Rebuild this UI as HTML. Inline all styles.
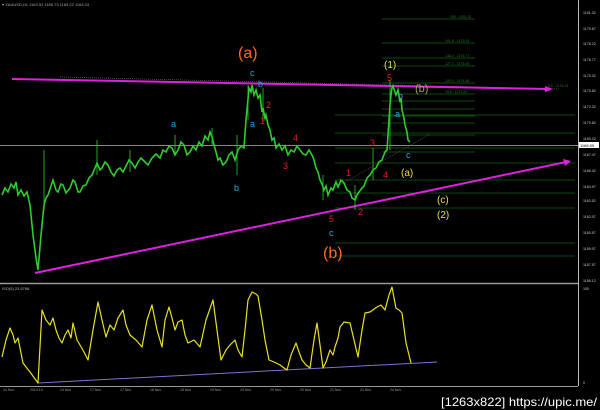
<!DOCTYPE html>
<html><head><meta charset="utf-8"><style>
html,body{margin:0;padding:0;background:#000;width:600px;height:410px;overflow:hidden}
svg{display:block}
text{font-family:"Liberation Sans",sans-serif}
</style></head><body>
<svg width="600" height="410" viewBox="0 0 600 410" xmlns="http://www.w3.org/2000/svg">
<rect width="600" height="410" fill="#000"/>
<text x="2" y="6" font-size="4" fill="#aaa">▾ XAUUSD,H1  1163.52  1165.73  1163.22  1164.03</text>
<line x1="578.5" y1="0" x2="578.5" y2="386" stroke="#bbb" stroke-width="1"/>
<line x1="0" y1="283.5" x2="578" y2="283.5" stroke="#999" stroke-width="1.5"/>
<line x1="0" y1="386.5" x2="578" y2="386.5" stroke="#999" stroke-width="1"/>
<g font-size="3.6" fill="#ccc">
<text x="583" y="14">1181.32</text><text x="583" y="30">1179.67</text><text x="583" y="45">1178.22</text><text x="583" y="61">1176.77</text><text x="583" y="77">1175.32</text><text x="583" y="92">1173.82</text><text x="583" y="108">1172.32</text><text x="583" y="124">1170.82</text><text x="583" y="140">1169.32</text><text x="583" y="156">1167.47</text><text x="583" y="172">1166.42</text><text x="583" y="188">1164.97</text><text x="583" y="202">1163.52</text><text x="583" y="218">1162.07</text><text x="583" y="234">1160.57</text><text x="583" y="250">1159.07</text><text x="583" y="266">1157.57</text><text x="583" y="282">1156.12</text>
<text x="583" y="290">100</text><text x="583" y="384">0</text>
</g>
<rect x="579" y="142" width="20" height="6" fill="#fff"/>
<text x="580" y="147" font-size="4" fill="#000">1168.09</text>
<g stroke="#0d4a0d" stroke-width="1">
<line x1="382" y1="19" x2="475" y2="19"/><line x1="382" y1="43" x2="475" y2="43"/><line x1="382" y1="58" x2="475" y2="58"/><line x1="382" y1="66" x2="475" y2="66"/><line x1="382" y1="83" x2="475" y2="83"/><line x1="382" y1="94" x2="475" y2="94"/><line x1="382" y1="101" x2="475" y2="101"/><line x1="382" y1="109" x2="475" y2="109"/><line x1="382" y1="116" x2="475" y2="116"/><line x1="382" y1="123" x2="475" y2="123"/><line x1="382" y1="135" x2="475" y2="135"/><line x1="382" y1="152" x2="475" y2="152"/>
<line x1="335" y1="115" x2="575" y2="115"/><line x1="335" y1="133" x2="575" y2="133"/><line x1="335" y1="148" x2="575" y2="148"/><line x1="335" y1="163" x2="575" y2="163"/><line x1="335" y1="180" x2="575" y2="180"/><line x1="335" y1="193" x2="575" y2="193"/><line x1="335" y1="208" x2="575" y2="208"/><line x1="335" y1="243" x2="575" y2="243"/><line x1="335" y1="256" x2="575" y2="256"/>
</g>
<g font-size="3.5" fill="#2a7a2a">
<text x="450" y="18">200 - 1181.32</text><text x="445" y="42">161.8 - 1179.24</text><text x="445" y="57">138.2 - 1176.77</text><text x="445" y="65">127.2 - 1176.06</text><text x="445" y="82">100.0 - 1174.36</text><text x="445" y="93">78.6 - 1173.52</text><text x="548" y="87">0.0 - 1174.01</text>
</g>
<line x1="0" y1="145.5" x2="578" y2="145.5" stroke="#888" stroke-width="1"/>
<line x1="60" y1="77" x2="560" y2="89" stroke="#666" stroke-width="0.7" stroke-dasharray="1,1"/>
<line x1="340" y1="185" x2="430" y2="134" stroke="#555" stroke-width="0.7" stroke-dasharray="1,1"/>
<line x1="12" y1="79" x2="548" y2="89" stroke="#e020e0" stroke-width="2"/>
<polygon points="553,89 545,86 545,92" fill="#e020e0"/>
<line x1="35" y1="273" x2="566" y2="162" stroke="#e020e0" stroke-width="2"/>
<polygon points="571,161 563,159 565,166" fill="#e020e0"/>
<polyline fill="none" stroke="#2ecc2e" stroke-width="1.6" stroke-linejoin="miter" points="2,195 5,188 8,192 11,184 14,188 16,182 18,195 21,190 24,196 27,192 30,205 33,235 36,258 38,270 41,235 44,205 46,198 48,195 51,186 53,180 56,190 58,192 61,184 63,185 66,193 70,188 73,180 75,182 78,192 80,192 83,186 86,185 89,178 92,175 95,168 97,163 100,170 102,168 105,162 108,165 111,172 114,176 117,170 120,168 123,172 126,166 129,160 132,163 135,168 138,162 141,158 145,162 148,165 152,158 156,154 160,158 163,150 166,152 169,146 172,148 175,155 178,150 181,142 184,145 187,155 190,152 193,146 196,150 199,142 202,146 205,136 208,140 210,132 212,137 214,145 216,152 218,160 220,158 223,165 226,162 229,155 232,152 235,160 238,150 241,146 244,148 246,120 247,110 249,88 251,92 252,85 254,95 256,90 258,98 260,95 262,112 263,108 265,118 266,115 268,125 270,130 272,140 274,138 276,148 279,144 282,150 285,146 288,155 291,150 294,152 297,146 300,150 303,154 306,155 309,150 312,155 314,160 316,168 318,172 320,180 322,184 324,190 326,186 328,195 331,188 333,190 336,182 338,187 341,180 344,183 347,190 350,192 352,198 355,200 357,195 359,192 362,188 364,186 367,178 370,175 373,170 376,168 379,162 382,160 385,152 387,150 388,135 389,120 390,105 391,95 392,88 393,86 395,92 396,95 398,90 400,102 401,98 402,110 404,118 405,125 407,132 408,140 410,142"/>
<g stroke="#2ecc2e" stroke-width="0.8">
<line x1="44" y1="150" x2="44" y2="210"/><line x1="97" y1="140" x2="97" y2="175"/><line x1="130" y1="150" x2="130" y2="172"/><line x1="175" y1="135" x2="175" y2="155"/><line x1="212" y1="128" x2="212" y2="145"/><line x1="237" y1="135" x2="237" y2="175"/><line x1="248" y1="85" x2="248" y2="120"/><line x1="263" y1="88" x2="263" y2="122"/><line x1="323" y1="175" x2="323" y2="200"/><line x1="355" y1="185" x2="355" y2="210"/><line x1="373" y1="148" x2="373" y2="180"/><line x1="390" y1="80" x2="390" y2="150"/>
</g>
<g font-size="16" fill="#ff6a20"><text x="238" y="58">(a)</text><text x="323" y="258">(b)</text></g>
<g font-size="10" fill="#e8e040"><text x="384" y="68">(1)</text><text x="401" y="176">(a)</text><text x="437" y="203">(c)</text><text x="437" y="218">(2)</text></g>
<text x="415" y="92" font-size="11" fill="#a8a070">(b)</text>
<g font-size="9" fill="#22aadd"><text x="250" y="76">c</text><text x="258" y="87">b</text><text x="250" y="127">a</text><text x="171" y="127">a</text><text x="234" y="191">b</text><text x="398" y="99">b</text><text x="395" y="117">a</text><text x="406" y="158">c</text><text x="329" y="236">c</text></g>
<g font-size="9" fill="#e02020"><text x="266" y="108">2</text><text x="260" y="124">1</text><text x="293" y="141">4</text><text x="283" y="169">3</text><text x="387" y="81">5</text><text x="370" y="146">3</text><text x="346" y="176">1</text><text x="383" y="178">4</text><text x="329" y="222">5</text><text x="358" y="215">2</text></g>
<text x="2" y="290" font-size="4" fill="#bbb">ISO(5) 23.9788</text>
<line x1="38" y1="383" x2="437" y2="362" stroke="#8070d0" stroke-width="1"/>
<polyline fill="none" stroke="#e8e020" stroke-width="1.2" stroke-linejoin="round" points="2,357 6,340 10,328 13,335 15,343 18,338 23,363 30,372 38,383 42,310 46,320 50,325 53,318 56,330 59,338 62,343 65,335 68,330 71,338 73,323 77,340 80,345 84,352 88,360 93,330 98,302 102,320 106,337 110,325 114,330 118,318 123,310 126,325 130,335 136,340 142,347 147,320 152,305 157,330 162,347 165,320 169,307 172,318 175,330 178,322 182,320 185,335 188,343 194,340 200,347 206,320 213,300 217,330 221,360 226,350 230,345 235,340 238,350 242,357 245,330 248,300 252,292 256,294 258,296 262,320 265,340 269,360 274,362 280,365 284,368 287,370 291,355 296,343 299,352 302,360 306,365 310,368 314,340 317,323 320,345 323,368 326,362 330,350 333,355 335,347 338,338 340,327 344,322 350,323 354,340 358,357 362,330 365,313 370,312 377,307 381,305 385,310 389,295 392,287 394,298 396,308 399,310 402,313 404,328 406,343 409,355 411,363"/>
<g font-size="3.5" fill="#999"><text x="3" y="391">14 Nov</text><text x="30" y="391">2014 10</text><text x="60" y="391">14 Nov</text><text x="90" y="391">17 Nov</text><text x="120" y="391">17 Nov</text><text x="150" y="391">18 Nov</text><text x="180" y="391">18 Nov</text><text x="210" y="391">19 Nov</text><text x="240" y="391">19 Nov</text><text x="270" y="391">20 Nov</text><text x="300" y="391">20 Nov</text><text x="330" y="391">21 Nov</text><text x="360" y="391">21 Nov</text><text x="390" y="391">24 Nov</text></g>
<text x="441" y="406" font-size="12" fill="#fff" textLength="156" lengthAdjust="spacingAndGlyphs">[1263x822] https://upic.me/</text>
</svg>
</body></html>
